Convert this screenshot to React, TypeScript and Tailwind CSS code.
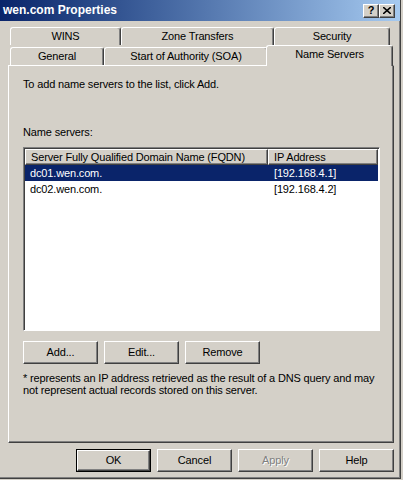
const raised =
  "border border-t-white border-l-white border-r-[#404040] border-b-[#404040] shadow-[inset_-1px_-1px_#808080]";

function TitleButton({ children }: { children: React.ReactNode }) {
  return (
    <div
      className={`flex h-[14px] w-[16px] items-center justify-center bg-[#d4d0c8] text-[11px] font-bold leading-none text-black ${raised}`}
    >
      {children}
    </div>
  );
}

function Tab({
  label,
  width,
  selected,
}: {
  label: string;
  width: number;
  selected?: boolean;
}) {
  return (
    <div
      style={{ width }}
      className={
        selected
          ? "relative z-10 -ml-[2px] -mb-[1px] flex h-[21px] shrink-0 items-start justify-center rounded-t-[3px] border-l border-t border-r border-l-white border-t-white border-r-[#404040] bg-[#d4d0c8] pt-[2px] shadow-[inset_-1px_0_#808080]"
          : "flex h-[18px] shrink-0 items-center justify-center rounded-t-[3px] border-l border-t border-r border-l-white border-t-white border-r-[#404040] bg-[#d4d0c8] shadow-[inset_-1px_0_#808080]"
      }
    >
      {label}
    </div>
  );
}

function Button({
  label,
  disabled,
  isDefault,
}: {
  label: string;
  disabled?: boolean;
  isDefault?: boolean;
}) {
  const inner = (
    <div
      className={`flex h-full w-full items-center justify-center bg-[#d4d0c8] ${raised} ${
        disabled ? "text-[#808080] [text-shadow:1px_1px_#ffffff]" : "text-black"
      }`}
    >
      {label}
    </div>
  );
  if (isDefault) {
    return <div className="h-[23px] w-[75px] border border-black">{inner}</div>;
  }
  return <div className="h-[23px] w-[75px]">{inner}</div>;
}

export default function App() {
  return (
    <div className="h-[480px] w-[403px] overflow-hidden bg-[#d4d0c8] font-['Liberation_Sans',Arial,sans-serif] text-[11px] leading-[13px] tracking-[-0.15px] text-black">
      <div className="h-[479px] w-[401px] border-r border-b border-r-[#404040] border-b-[#404040] shadow-[inset_-1px_-1px_#808080]">
        {/* Title bar */}
        <div className="flex h-[21px] items-center justify-between bg-gradient-to-r from-[#0a246a] to-[#a6caf0] pl-[3px] pr-[5px]">
          <span className="text-[12px] font-bold tracking-normal text-white">wen.com Properties</span>
          <div className="flex">
            <TitleButton>?</TitleButton>
            <TitleButton>
              <svg viewBox="0 0 8 7" className="h-[7px] w-[8px]">
                <path d="M0 0 L8 7 M8 0 L0 7" stroke="black" strokeWidth="1.6" />
              </svg>
            </TitleButton>
          </div>
        </div>

        <div className="pl-[8px]">
          {/* Tabs */}
          <div className="mt-[6px] flex pl-[2px]">
            <Tab label="WINS" width={111} />
            <Tab label="Zone Transfers" width={153} />
            <Tab label="Security" width={116} />
          </div>
          <div className="flex items-end pl-[2px]">
            <Tab label="General" width={94} />
            <Tab label="Start of Authority (SOA)" width={164} />
            <Tab label="Name Servers" width={127} selected />
          </div>

          {/* Panel */}
          <div className="h-[378px] w-[386px] border border-t-white border-l-white border-r-[#404040] border-b-[#404040] px-[14px] pt-[12px] shadow-[inset_-1px_-1px_#808080]">
            <div>To add name servers to the list, click Add.</div>
            <div className="mt-[35px]">Name servers:</div>

            <div className="mt-[8px] h-[184px] w-[357px] border border-t-[#808080] border-l-[#808080] border-r-white border-b-white bg-white shadow-[inset_1px_1px_#404040] p-[1px]">
              <div className="flex h-[16px]">
                <div className={`flex w-[243px] items-center bg-[#d4d0c8] pl-[5px] ${raised}`}>
                  Server Fully Qualified Domain Name (FQDN)
                </div>
                <div className={`flex w-[110px] items-center bg-[#d4d0c8] pl-[5px] ${raised}`}>
                  IP Address
                </div>
              </div>
              <div className="flex h-[16px] items-center bg-[#0a246a] text-white">
                <div className="w-[243px] pl-[5px]">dc01.wen.com.</div>
                <div className="pl-[6px]">[192.168.4.1]</div>
              </div>
              <div className="flex h-[16px] items-center">
                <div className="w-[243px] pl-[5px]">dc02.wen.com.</div>
                <div className="pl-[6px]">[192.168.4.2]</div>
              </div>
            </div>

            <div className="mt-[10px] flex gap-[6px]">
              <Button label="Add..." />
              <Button label="Edit..." />
              <Button label="Remove" />
            </div>

            <div className="mt-[8px] whitespace-nowrap leading-[12px]">
              * represents an IP address retrieved as the result of a DNS query and may
              <br />
              not represent actual records stored on this server.
            </div>
          </div>

          {/* Dialog buttons */}
          <div className="mt-[6px] flex w-[386px] justify-end gap-[6px]">
            <Button label="OK" isDefault />
            <Button label="Cancel" />
            <Button label="Apply" disabled />
            <Button label="Help" />
          </div>
        </div>
      </div>
    </div>
  );
}
